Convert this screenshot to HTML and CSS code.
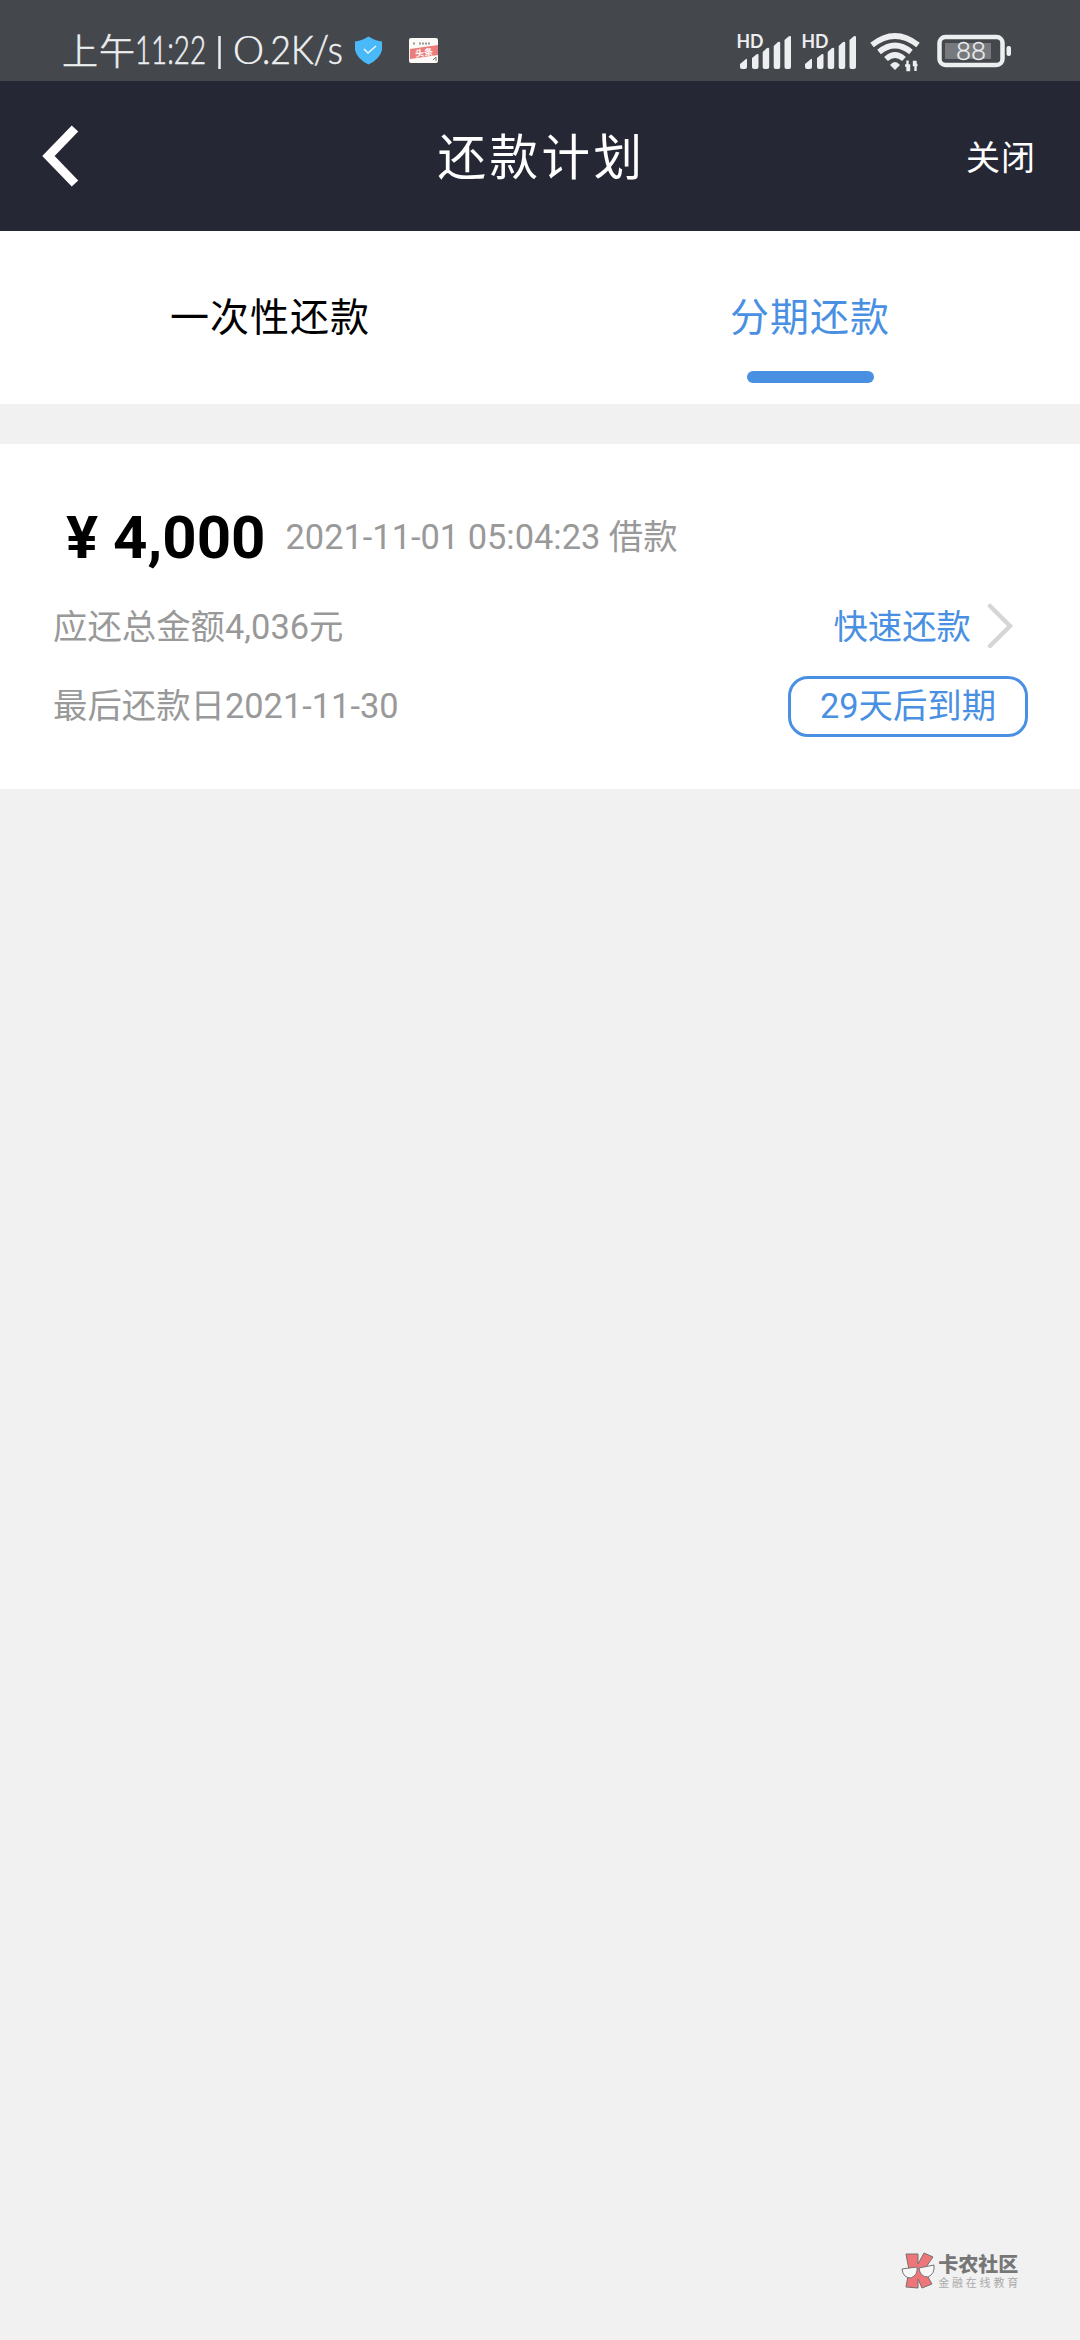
FILE: index.html
```html
<!DOCTYPE html>
<html lang="zh-CN">
<head>
<meta charset="utf-8">
<title>还款计划</title>
<link rel="stylesheet" href="styles.css">
</head>
<body>
<div class="status">
  <svg class="status-left" width="460" height="81" viewBox="0 0 460 81">
    <g class="status-text">
      <text class="cjk" x="62" y="65" textLength="73">上午</text>
      <text x="135" y="64" textLength="71" lengthAdjust="spacingAndGlyphs">11:22</text>
      <path d="M219.500 36V69" stroke="#eceef0" stroke-width="2.500"/>
      <text class="zero" x="233" y="64" textLength="31" lengthAdjust="spacingAndGlyphs">0</text>
      <text x="262" y="64" textLength="81" lengthAdjust="spacingAndGlyphs">.2K/s</text>
    </g>
    <path d="M368.500 36.500Q376 41 382 41.500V50Q380 59 368.500 64.500Q357 59 355 50V41.500Q361 41 368.500 36.500Z" fill="#4ab9fa"/>
    <path d="M364 49l4 4 8-7" fill="none" stroke="#eaf7ff" stroke-width="1.500"/>
    <rect x="409" y="38" width="29" height="25" rx="2" fill="#fcf9f7"/>
    <path d="M410 49l28-4v10l-28 4z" fill="#ea7c7b"/>
    <path d="M413 43.500h3M419 43.500h12" stroke="#999" stroke-width="2" stroke-dasharray="2 1"/>
    <text x="415" y="56" class="mini" transform="rotate(-7 424 52)">头条</text>
    <path d="M433 60l3-3v4" fill="none" stroke="#777"/>
  </svg>
  <svg width="360" height="81" viewBox="720 0 360 81">
    <g id="signal" fill="#eceef0">
      <text x="736.500" y="47.500" class="hd" textLength="27" lengthAdjust="spacingAndGlyphs">HD</text>
      <path d="M740 64l6-5q1-1 1 1v7q0 2-2 2h-3q-2 0-2-2zM752 58l5-4q1.500-.500 1.500 1v12q0 2-2 2H754q-2 0-2-2zM762.700 52l4.300-4q2.200-1 2.200 1v18q0 2-2 2h-2.500q-2 0-2-2zM773.700 46l4.300-4q2.200-1 2.200 1v24q0 2-2 2h-2.500q-2 0-2-2zM784.500 40l4.300-3.700q2.200-1 2.200 1V67q0 2-2 2h-2.500q-2 0-2-2z"/>
    </g>
    <use href="#signal" x="65"/>
    <g fill="none" stroke="#eceef0" stroke-width="5.600">
      <path d="M872 45Q895 27 918 45M879 52Q895 39 911 52M886 59Q895 51 904 59"/>
    </g>
    <path d="M890 65q5-6 10 0l-5 5z" fill="#eceef0"/>
    <path d="M905 65.500h4V70h-1.500V60.500M917.500 65h-3.500v-3h1.500V71" fill="none" stroke="#eceef0" stroke-width="2.400"/>
    <rect x="945" y="43" width="46" height="16" fill="#77797d"/>
    <rect x="939.500" y="37" width="63" height="28" rx="6" fill="none" stroke="#eceef0" stroke-width="4.500"/>
    <rect x="1006.500" y="46" width="4.500" height="10" rx="2" fill="#eceef0"/>
    <text x="956" y="60" class="battery" textLength="30" lengthAdjust="spacingAndGlyphs">88</text>
  </svg>
</div>
<header class="header">
  <svg class="back" width="40" height="64" viewBox="0 0 40 64"><path d="M34 4.500L7.500 32L34 59.500" fill="none" stroke="#fff" stroke-width="9"/></svg>
  <h1 class="title">还款计划</h1>
  <span class="close">关闭</span>
</header>
<nav class="tabs">
  <div class="tab">一次性还款</div>
  <div class="tab active">分期还款</div>
</nav>
<section class="card">
  <div class="row amount-row"><span class="amount">¥&nbsp;4,000</span><span class="date">2021-11-01 05:04:23 借款</span></div>
  <div class="row"><span class="label">应还总金额4,036元</span><span class="pay"><span class="label">快速还款</span><svg width="28" height="48" viewBox="0 0 28 48"><path d="M3 4L23 24L3 44" fill="none" stroke="#d6d6d6" stroke-width="4.500" stroke-linecap="round"/></svg></span></div>
  <div class="row last"><span class="label">最后还款日2021-11-30</span><span class="due">29天后到期</span></div>
</section>
<footer class="brand">
  <svg width="34" height="38" viewBox="0 0 34 38">
    <path d="M5 2H17V12L23 1L32 5L23 18L31 32L21 36L17 27V36L5 35L8 18Z" fill="#ee7679" stroke="#77706f" stroke-width="1"/>
    <path d="M1 17L16 15Q17 23 10 26Q2 26 1 17ZM18 16L33 13Q34 22 27 25Q19 25 18 16Z" fill="#f7f7f7" stroke="#777" stroke-width="1"/>
  </svg>
  <div class="brand-copy"><strong>卡农社区</strong><span>金融在线教育</span></div>
</footer>
</body>
</html>
```

FILE: styles.css
```css
* { box-sizing: border-box; }
body {
  margin: 0;
  width: 1080px;
  height: 2340px;
  display: flex;
  flex-direction: column;
  background: #f1f1f1;
  font-family: Roboto, "Noto Sans CJK SC", sans-serif;
  color: #999;
}
svg { display: block; flex: none; }
.status {
  height: 81px;
  display: flex;
  justify-content: space-between;
  background: #44474b;
}
.status-text { fill: #eceef0; stroke: #eceef0; stroke-width: .6px; font: 300 39px Lato, "Noto Sans CJK SC", sans-serif; }
.zero { stroke-width: 0; }
.cjk { font-size: 36px; }
.mini { fill: #fff; font: 700 9px "Noto Sans CJK SC", sans-serif; }
.hd { font: 700 18px Lato, sans-serif; }
.battery { fill: #eceef0; font: 300 26px Lato, sans-serif; stroke: #eceef0; stroke-width: .4px; }
.header {
  height: 150px;
  padding: 0 44px 0 41px;
  display: grid;
  grid-template-columns: 1fr auto 1fr;
  align-items: center;
  background: #262735;
  color: #fff;
}
.title { margin: 0; padding: 6px 0 0 6px; font-size: 48.500px; font-weight: 400; line-height: 72px; letter-spacing: 3.500px; }
.close { justify-self: end; padding-bottom: 2px; font-size: 34px; letter-spacing: 1px; }
.tabs {
  height: 173px;
  display: grid;
  grid-template-columns: 1fr 1fr;
  background: #fff;
}
.tab {
  display: flex;
  flex-direction: column;
  align-items: center;
  padding-top: 57px;
  color: #000;
  font-size: 39px;
  letter-spacing: 1px;
  line-height: 60px;
}
.active { color: #4a90e2; }
.active::after {
  content: "";
  width: 127px;
  height: 12px;
  margin-top: 23px;
  border-radius: 6px;
  background: #4a90e2;
}
.card {
  height: 345px;
  margin-top: 40px;
  padding: 54px 53px 0;
  background: #fff;
  font-size: 34.400px;
}
.row { height: 79px; display: flex; align-items: center; justify-content: space-between; }
.amount-row { height: 88px; padding: 0 0 9px 13px; justify-content: flex-start; gap: 20px; }
.amount { color: #000; font-size: 60px; font-weight: 700; }
.date { padding-bottom: 8px; }
.label { padding-bottom: 4px; }
.pay { display: flex; align-items: center; gap: 16px; color: #4a90e2; padding-right: 12px; }
.due {
  width: 240px;
  height: 61px;
  margin-top: 3px;
  padding-bottom: 7px;
  display: flex;
  align-items: center;
  justify-content: center;
  border: 3px solid #4a90e2;
  border-radius: 20px;
  color: #4a90e2;
}
.last { margin-right: -1px; }
.brand {
  display: flex;
  align-items: center;
  gap: 3px;
  margin: auto 59px 50px auto;
}
.brand-copy { display: flex; flex-direction: column; font-family: "Noto Sans CJK SC", sans-serif; }
.brand-copy strong { color: #777; font-size: 20px; font-weight: 900; line-height: 22px; }
.brand-copy span { color: #aaa; font-size: 11px; line-height: 14px; letter-spacing: 2.800px; }
```
